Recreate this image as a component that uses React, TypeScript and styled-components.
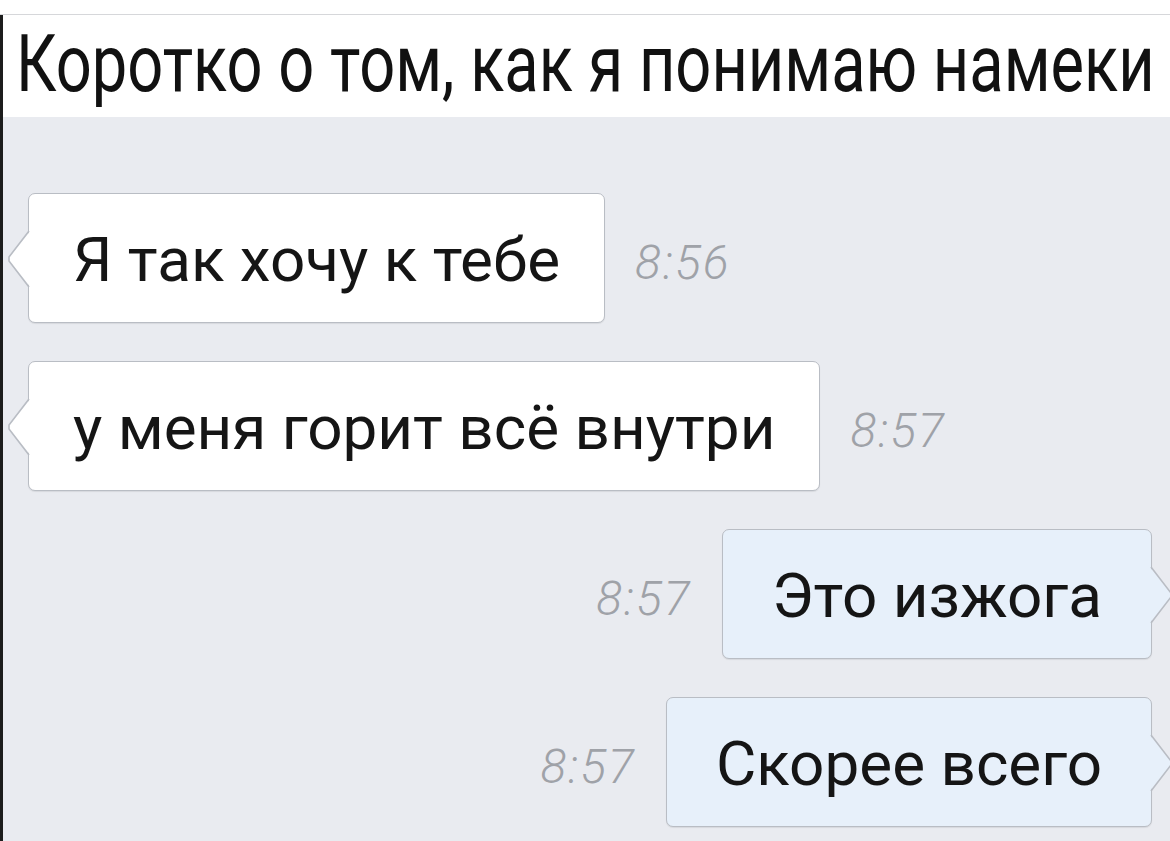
import * as React from 'react';
import styled, { createGlobalStyle } from 'styled-components';

const GlobalStyle = createGlobalStyle`
  html, body {
    margin: 0;
    padding: 0;
    background: #fff;
  }
`;

type Side = 'in' | 'out';

interface Message {
  side: Side;
  text: string;
  time: string;
}

const messages: Message[] = [
  { side: 'in', text: 'Я так хочу к тебе', time: '8:56' },
  { side: 'in', text: 'у меня горит всё внутри', time: '8:57' },
  { side: 'out', text: 'Это изжога', time: '8:57' },
  { side: 'out', text: 'Скорее всего', time: '8:57' },
];

const bubbleColors = {
  in: '#ffffff',
  out: '#e7f0fa',
};
const borderColor = '#b9bdc4';

const Tail = ({ side }: { side: Side }) => {
  const fill = bubbleColors[side];
  return (
    <TailSvg side={side} width="26" height="58" viewBox="0 0 26 58">
      {side === 'in' ? (
        <>
          <polygon points="26,0 4,27 4,31 26,58" fill={fill} />
          <polyline points="24,1 4,27 4,31 24,57" fill="none" stroke={borderColor} strokeWidth="1.6" />
        </>
      ) : (
        <>
          <polygon points="0,0 22,27 22,31 0,58" fill={fill} />
          <polyline points="2,1 22,27 22,31 2,57" fill="none" stroke={borderColor} strokeWidth="1.6" />
        </>
      )}
    </TailSvg>
  );
};

export default function App() {
  return (
    <Page>
      <GlobalStyle />
      <TopStrip />
      <Frame>
        <Header>
          <Title>Коротко о том, как я понимаю намеки</Title>
        </Header>
        <Chat>
          {messages.map((m, i) => (
            <Row key={i} side={m.side}>
              <Bubble side={m.side}>
                <Tail side={m.side} />
                <BubbleText>{m.text}</BubbleText>
              </Bubble>
              <Time>{m.time}</Time>
            </Row>
          ))}
        </Chat>
      </Frame>
    </Page>
  );
}

const Page = styled.div`
  width: 1170px;
  height: 841px;
  overflow: hidden;
  display: flex;
  flex-direction: column;
  background: #fff;
`;

const TopStrip = styled.div`
  height: 14px;
  border-bottom: 1px solid #d6d7da;
  background: #fff;
`;

const Frame = styled.div`
  flex: 1;
  display: flex;
  flex-direction: column;
  border-left: 3px solid #1c1c1c;
`;

const Header = styled.div`
  height: 102px;
  display: flex;
  align-items: center;
  padding-left: 13px;
  background: #fff;
`;

// the source font is a condensed face, so squeeze Roboto horizontally
const Title = styled.h1`
  margin: 0;
  font-family: Roboto, 'Noto Sans', sans-serif;
  font-weight: 400;
  font-size: 80px;
  line-height: 1;
  color: #111;
  white-space: nowrap;
  padding-bottom: 4px;
  transform: scaleX(0.79);
  transform-origin: left center;
`;

const Chat = styled.div`
  flex: 1;
  display: flex;
  flex-direction: column;
  gap: 38px;
  padding: 76px 18px 0 25px;
  background: #e9ebf0;
`;

const Row = styled.div<{ side: Side }>`
  display: flex;
  align-items: center;
  flex-direction: ${(p) => (p.side === 'in' ? 'row' : 'row-reverse')};
  gap: 30px;
`;

const Bubble = styled.div<{ side: Side }>`
  position: relative;
  box-sizing: border-box;
  height: 130px;
  display: flex;
  align-items: center;
  padding: ${(p) => (p.side === 'in' ? '0 44px 0 44px' : '0 49px 0 49px')};
  background: ${(p) => bubbleColors[p.side]};
  border: 1.6px solid ${borderColor};
  border-radius: 7px;
  box-shadow: 0 1px 1px rgba(0, 0, 0, 0.08);
`;

const TailSvg = styled.svg<{ side: Side }>`
  position: absolute;
  top: 36px;
  ${(p) => (p.side === 'in' ? 'left: -24px;' : 'right: -24px;')}
  overflow: visible;
`;

const BubbleText = styled.span`
  font-family: Roboto, 'Noto Sans', sans-serif;
  font-size: 62px;
  line-height: 1;
  color: #151515;
  white-space: nowrap;
  padding-top: 4px;
`;

const Time = styled.span`
  font-family: Roboto, 'Noto Sans', sans-serif;
  font-style: italic;
  font-weight: 300;
  font-size: 48px;
  letter-spacing: 2px;
  color: #9fa2a8;
  padding-top: 8px;
`;
